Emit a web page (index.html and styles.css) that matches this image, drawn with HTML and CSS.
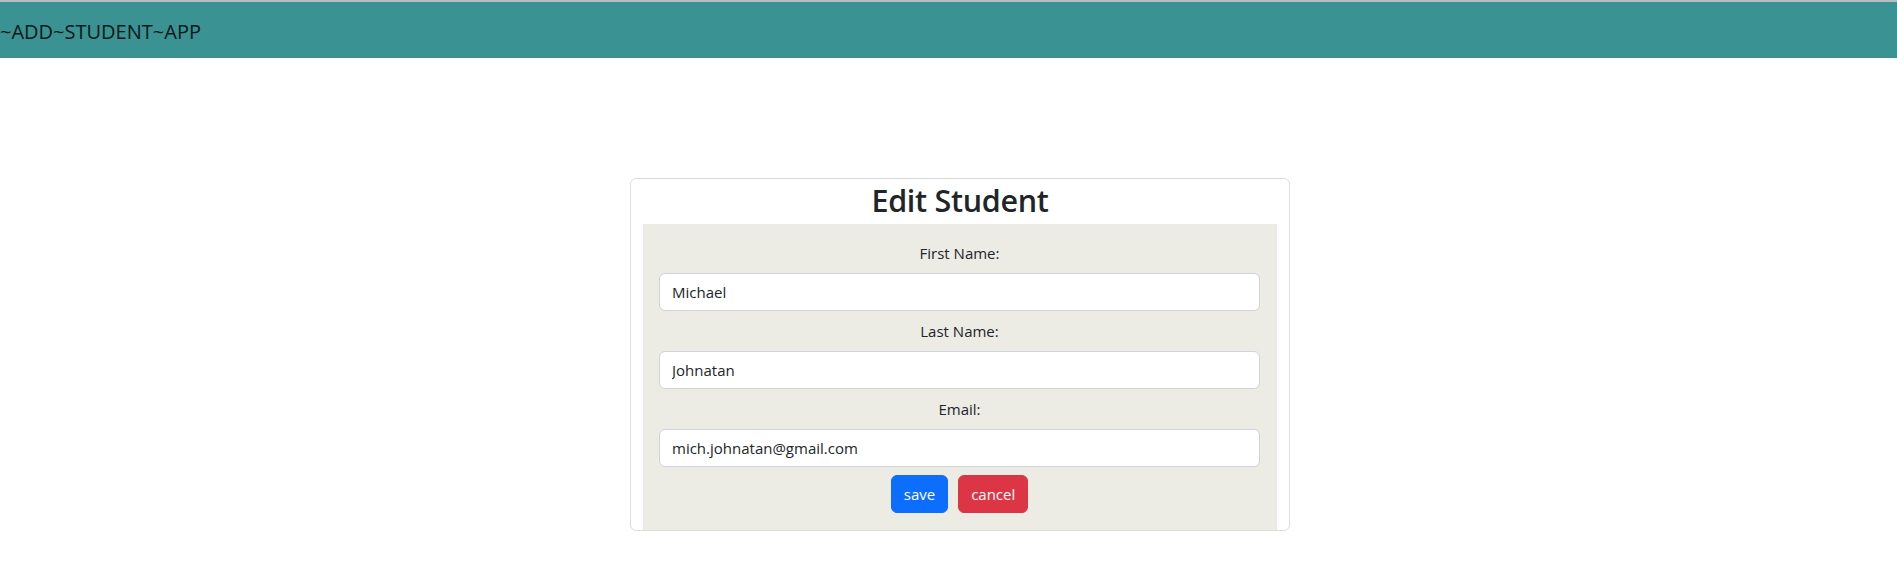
FILE: index.html
```html
<!DOCTYPE html>
<html lang="en">
<head>
<meta charset="utf-8">
<title>Edit Student</title>
<link rel="stylesheet" href="styles.css">
</head>
<body>
<header class="topbar">
  <span class="brand">~ADD~STUDENT~APP</span>
</header>
<main class="page">
  <section class="card">
    <h2 class="card-title">Edit Student</h2>
    <form class="panel">
      <label class="field-label" for="first">First Name:</label>
      <input class="field-input" id="first" type="text" value="Michael">
      <label class="field-label" for="last">Last Name:</label>
      <input class="field-input" id="last" type="text" value="Johnatan">
      <label class="field-label" for="email">Email:</label>
      <input class="field-input" id="email" type="text" value="mich.johnatan@gmail.com">
      <div class="actions">
        <button type="button" class="btn btn-save">save</button>
        <button type="button" class="btn btn-cancel">cancel</button>
      </div>
    </form>
  </section>
</main>
</body>
</html>
```
FILE: styles.css
```css
* { box-sizing: border-box; }
html, body {
  margin: 0;
  padding: 0;
  background: #ffffff;
  font-family: "Open Sans", "Noto Sans", sans-serif;
  color: #212529;
}
.topbar {
  border-top: 2px solid #b9bdbd;
  background: #3a9293;
  height: 58px;
  display: flex;
  align-items: center;
}
.brand {
  font-size: 20px;
  color: #0b1818;
  letter-spacing: 0;
  padding-top: 2px;
}
.page {
  display: flex;
  justify-content: center;
  padding-top: 120px;
  padding-left: 23px;
}
.card {
  width: 660px;
  border: 1px solid #dcdcdc;
  border-radius: 6px;
  padding: 0 12px;
  display: flex;
  flex-direction: column;
}
.card-title {
  margin: 0;
  height: 45px;
  text-align: center;
  font-size: 30.5px;
  font-weight: 600;
  line-height: 42px;
  color: #212529;
  letter-spacing: -0.3px;
}
.panel {
  background: #ecebe4;
  padding: 17px 17px 17px 16px;
  display: flex;
  flex-direction: column;
}
.field-label {
  display: block;
  text-align: center;
  font-size: 15px;
  line-height: 24px;
  margin: 0 0 8px;
}
.field-input + .field-label { margin-top: 8px; }
.field-input {
  display: block;
  width: 100%;
  height: 38px;
  padding: 6px 12px;
  font-family: inherit;
  font-size: 15px;
  color: #212529;
  background: #fff;
  border: 1px solid #ced4da;
  border-radius: 6px;
}
.actions {
  display: flex;
  justify-content: center;
  gap: 10px;
  margin-top: 8px;
}
.btn {
  height: 38px;
  padding: 0 12px;
  border: 1px solid transparent;
  border-radius: 6px;
  font-family: inherit;
  font-size: 15px;
  color: #fff;
  cursor: pointer;
}
.btn-save { background: #0d6efd; border-color: #0d6efd; }
.btn-cancel { background: #dc3545; border-color: #dc3545; }
```
